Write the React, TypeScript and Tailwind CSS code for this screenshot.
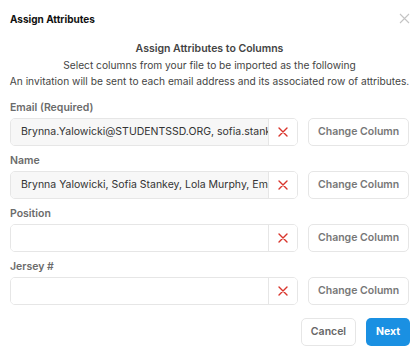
import React from "react";

function Row({ label, value }: { label: string; value?: string }) {
  return (
    <div className="flex flex-col">
      <div className="text-[10.5px] font-semibold text-[#6b6b6b] leading-[14px] h-[14px]">{label}</div>
      <div className="flex items-center mt-[3px] h-[28px]">
        <div className="flex h-full w-[289px] rounded-[5px] border border-[#e6e6e6] overflow-hidden">
          <div
            className={`flex-1 min-w-0 flex items-center pl-[10px] text-[10.5px] text-[#333] whitespace-nowrap overflow-hidden ${
              value ? "bg-[#f7f7f7]" : "bg-white"
            }`}
          >
            <span className="block overflow-hidden">{value}</span>
          </div>
          <div className="w-[29px] shrink-0 flex items-center justify-center border-l border-[#e6e6e6] bg-white">
            <svg width="10" height="10" viewBox="0 0 10 10">
              <path d="M1 1L9 9M9 1L1 9" stroke="#d9342b" strokeWidth="1.4" strokeLinecap="round" />
            </svg>
          </div>
        </div>
        <button className="ml-[10px] w-[101px] h-full rounded-[5px] border border-[#e6e6e6] bg-white text-[10.5px] font-semibold text-[#777]">
          Change Column
        </button>
      </div>
    </div>
  );
}

export default function App() {
  return (
    <div className="w-[419px] h-[354px] bg-white font-['Inter',sans-serif] relative">
      <div className="flex items-center justify-between px-[10px] pt-[12px] h-[26px]">
        <div className="text-[10px] font-bold text-[#111]">Assign Attributes</div>
        <svg width="11" height="11" viewBox="0 0 11 11" className="mr-[-1px] mt-[-1px]">
          <path d="M1 1L10 10M10 1L1 10" stroke="#c4c4c4" strokeWidth="1.1" />
        </svg>
      </div>
      <div className="flex flex-col items-center text-center mt-[15px] text-[10.2px] leading-[16px] text-[#444] whitespace-nowrap">
        <div className="font-semibold text-[10.5px]">Assign Attributes to Columns</div>
        <div>Select columns from your file to be imported as the following</div>
        <div>An invitation will be sent to each email address and its associated row of attributes.</div>
      </div>
      <div className="flex flex-col gap-[8px] px-[10px] mt-[12px]">
        <Row label="Email (Required)" value="Brynna.Yalowicki@STUDENTSSD.ORG, sofia.stankey@STUDENTSSD.ORG" />
        <Row label="Name" value="Brynna Yalowicki, Sofia Stankey, Lola Murphy, Emma" />
        <Row label="Position" />
        <Row label="Jersey #" />
      </div>
      <div className="flex justify-end gap-[10px] px-[9px] mt-[13px]">
        <button className="w-[55px] h-[28px] rounded-[5px] border border-[#e6e6e6] bg-white text-[10.5px] font-semibold text-[#666]">
          Cancel
        </button>
        <button className="w-[44px] h-[28px] rounded-[5px] bg-[#1a90e2] text-[10.5px] font-bold text-white">
          Next
        </button>
      </div>
    </div>
  );
}
